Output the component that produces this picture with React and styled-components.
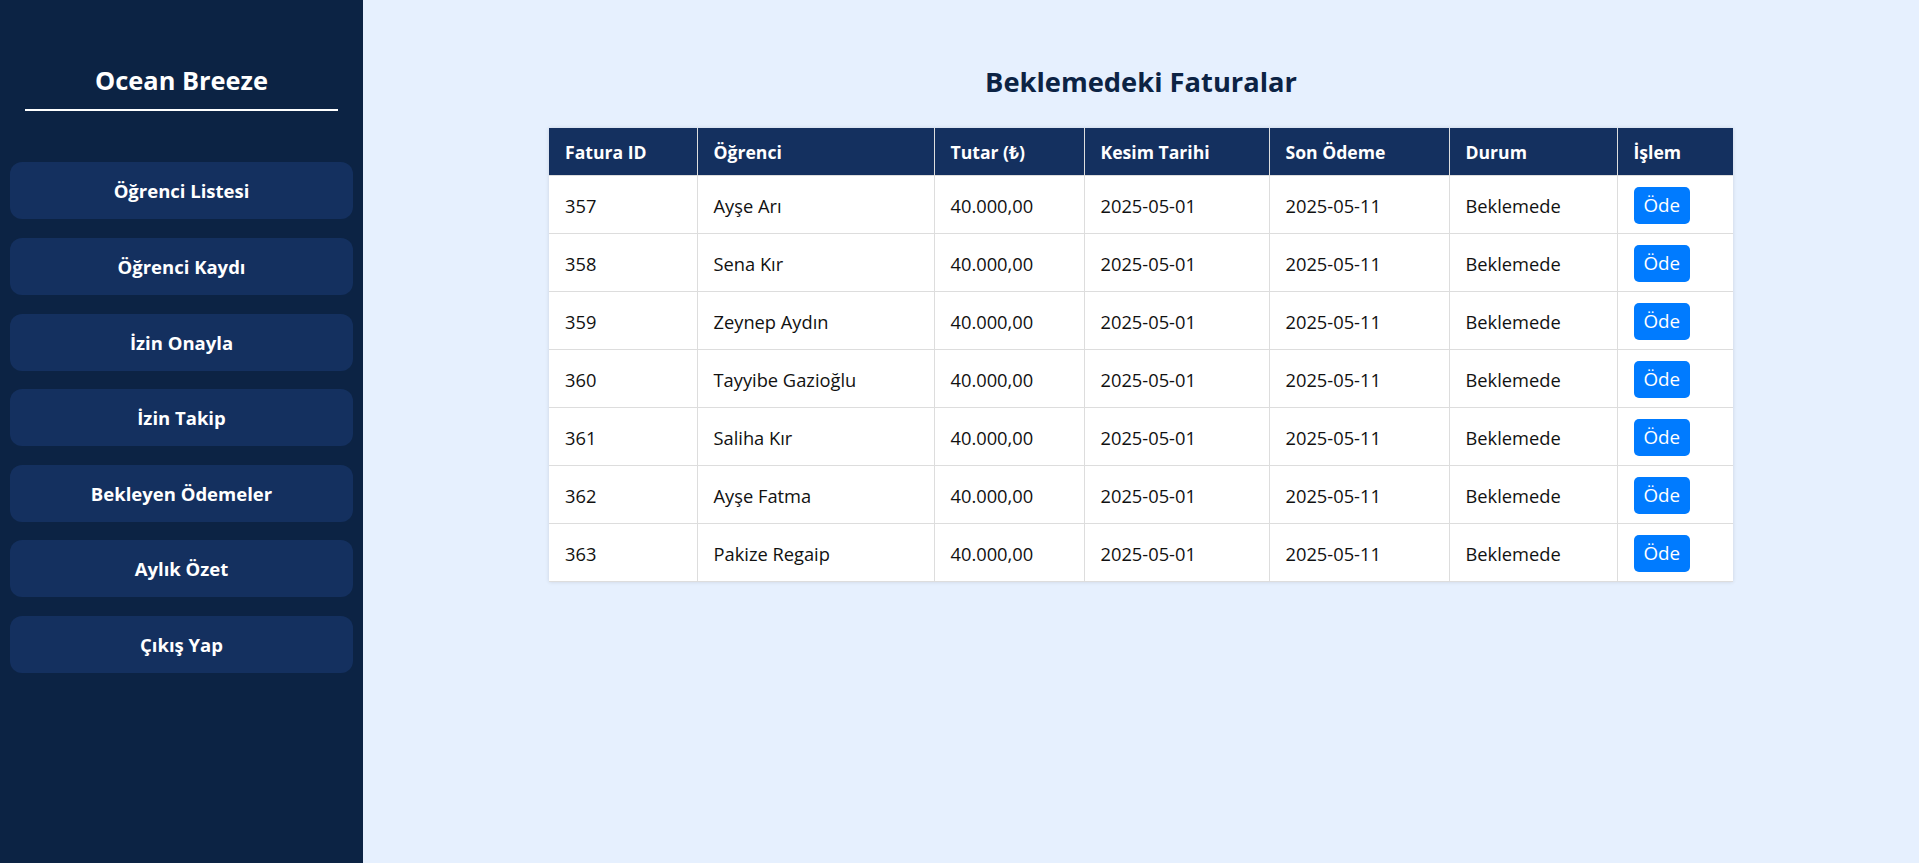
import React from "react";
import styled, { createGlobalStyle } from "styled-components";

const GlobalStyle = createGlobalStyle`
  * {
    box-sizing: border-box;
  }

  body {
    margin: 0;
    font-family: "Open Sans", "Noto Sans", sans-serif;
    background: #e6f0fe;
  }
`;

const Layout = styled.div`
  display: flex;
  min-height: 100vh;
`;

const Sidebar = styled.aside`
  width: 363px;
  flex-shrink: 0;
  background: #0c2344;
  padding: 65px 10px 20px;
  display: flex;
  flex-direction: column;
`;

const Brand = styled.h1`
  margin: 0 15px 51px;
  padding-bottom: 14px;
  border-bottom: 2px solid #ffffff;
  color: #ffffff;
  font-size: 25.4px;
  font-weight: 700;
  line-height: 1.2;
  text-align: center;
`;

const Menu = styled.nav`
  display: flex;
  flex-direction: column;
  gap: 18.6px;
`;

const MenuButton = styled.a`
  height: 57px;
  display: flex;
  align-items: center;
  justify-content: center;
  border-radius: 12px;
  background: #14305f;
  color: #ffffff;
  font-size: 18.5px;
  font-weight: 700;
  text-decoration: none;
  cursor: pointer;
`;

const Main = styled.main`
  flex: 1;
  padding: 66px 0 40px;
  display: flex;
  flex-direction: column;
  align-items: center;
`;

const Title = styled.h2`
  margin: 0 0 29px;
  color: #0c2344;
  font-size: 27.3px;
  font-weight: 700;
  line-height: 1.2;
`;

const Table = styled.table`
  width: 1184px;
  border-collapse: collapse;
  table-layout: fixed;
  background: #ffffff;
  box-shadow: 0 0 4px rgba(0, 0, 0, 0.12);
`;

const Th = styled.th`
  height: 48px;
  padding: 0 16px;
  background: #14305f;
  color: #ffffff;
  border: 1px solid #dddddd;
  border-top: none;
  font-size: 17.6px;
  font-weight: 700;
  text-align: left;
  &:first-child {
    border-left: none;
  }
  &:last-child {
    border-right: none;
  }
`;

const Td = styled.td`
  height: 58px;
  padding: 1px 16px 0;
  border: 1px solid #dddddd;
  color: #111111;
  font-size: 18.3px;
  text-align: left;
  &:first-child {
    border-left: none;
  }
  &:last-child {
    border-right: none;
  }
`;

const PayButton = styled.button`
  height: 37px;
  padding: 0 10px;
  border: none;
  border-radius: 5px;
  background: #007bff;
  color: #ffffff;
  font-family: inherit;
  font-size: 18.8px;
  cursor: pointer;
`;

const menuItems = [
  "Öğrenci Listesi",
  "Öğrenci Kaydı",
  "İzin Onayla",
  "İzin Takip",
  "Bekleyen Ödemeler",
  "Aylık Özet",
  "Çıkış Yap",
];

const columns = [
  { label: "Fatura ID", width: 148 },
  { label: "Öğrenci", width: 237 },
  { label: "Tutar (₺)", width: 150 },
  { label: "Kesim Tarihi", width: 185 },
  { label: "Son Ödeme", width: 180 },
  { label: "Durum", width: 168 },
  { label: "İşlem", width: 116 },
];

const invoices = [
  { id: 357, student: "Ayşe Arı" },
  { id: 358, student: "Sena Kır" },
  { id: 359, student: "Zeynep Aydın" },
  { id: 360, student: "Tayyibe Gazioğlu" },
  { id: 361, student: "Saliha Kır" },
  { id: 362, student: "Ayşe Fatma" },
  { id: 363, student: "Pakize Regaip" },
];

export default function App() {
  return (
    <>
      <GlobalStyle />
      <Layout>
        <Sidebar>
          <Brand>Ocean Breeze</Brand>
          <Menu>
            {menuItems.map((item) => (
              <MenuButton key={item}>{item}</MenuButton>
            ))}
          </Menu>
        </Sidebar>

        <Main>
          <Title>Beklemedeki Faturalar</Title>
          <Table>
            <colgroup>
              {columns.map((c) => (
                <col key={c.label} style={{ width: c.width }} />
              ))}
            </colgroup>
            <thead>
              <tr>
                {columns.map((c) => (
                  <Th key={c.label}>{c.label}</Th>
                ))}
              </tr>
            </thead>
            <tbody>
              {invoices.map((inv) => (
                <tr key={inv.id}>
                  <Td>{inv.id}</Td>
                  <Td>{inv.student}</Td>
                  <Td>40.000,00</Td>
                  <Td>2025-05-01</Td>
                  <Td>2025-05-11</Td>
                  <Td>Beklemede</Td>
                  <Td>
                    <PayButton>Öde</PayButton>
                  </Td>
                </tr>
              ))}
            </tbody>
          </Table>
        </Main>
      </Layout>
    </>
  );
}
